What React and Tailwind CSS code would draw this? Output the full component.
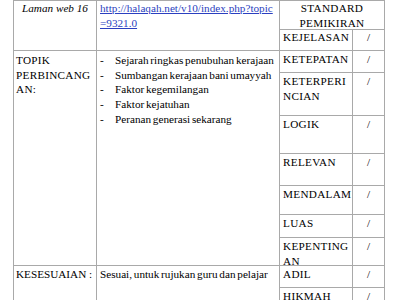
import React from 'react'

const kriteria = [
  { label: 'KETEPATAN', row: 'row-start-3' },
  { label: ['KETERPERI', 'NCIAN'], row: 'row-start-4' },
  { label: 'LOGIK', row: 'row-start-5' },
  { label: 'RELEVAN', row: 'row-start-6' },
  { label: 'MENDALAM', row: 'row-start-7' },
  { label: 'LUAS', row: 'row-start-8' },
  { label: ['KEPENTING', 'AN'], row: 'row-start-9' },
  { label: 'ADIL', row: 'row-start-10' },
  { label: 'HIKMAH', row: 'row-start-11' },
]

const topik = [
  'Sejarah ringkas penubuhan kerajaan',
  'Sumbangan kerajaan bani umayyah',
  'Faktor kegemilangan',
  'Faktor kejatuhan',
  'Peranan generasi sekarang',
]

export default function App() {
  return (
    <div className="h-[300px] w-[400px] overflow-hidden bg-white pl-[13px] font-['Liberation_Serif','Times_New_Roman',serif] text-[11.2px] leading-[14.5px] text-black">
      <div className="grid w-max grid-cols-[82px_182px_72px_31px] grid-rows-[28px_20px_21px_42px_37px_31px_28px_22px_27px_21px_40px] gap-px border border-[#a9a9a9] bg-[#a9a9a9]">
        {/* baris pertama */}
        <div className="col-start-1 row-start-1 row-span-2 bg-white text-center italic">Laman web 16</div>
        <div className="col-start-2 row-start-1 row-span-2 bg-white pl-[3px]">
          <span className="text-[#2b3fc0] underline">
            http://halaqah.net/v10/index.php?topic
            <br />
            =9321.0
          </span>
        </div>
        <div className="col-start-3 col-span-2 row-start-1 bg-white text-center tracking-[0.3px]">
          STANDARD
          <br />
          PEMIKIRAN
        </div>
        <div className="col-start-3 row-start-2 bg-white pl-[3px] tracking-[0.3px]">KEJELASAN</div>
        <div className="col-start-4 row-start-2 bg-white text-center">/</div>

        {/* topik */}
        <div className="col-start-1 row-start-3 row-span-7 bg-white pl-[2px] pt-[2px] tracking-[0.3px]">
          TOPIK
          <br />
          PERBINCANG
          <br />
          AN:
        </div>
        <div className="col-start-2 row-start-3 row-span-7 bg-white pl-[3px] pt-[2px] leading-[14.7px] [word-spacing:-1px]">
          {topik.map(t => (
            <div key={t} className="flex">
              <span className="w-[15px] shrink-0">-</span>
              <span>{t}</span>
            </div>
          ))}
        </div>

        {/* kesesuaian */}
        <div className="col-start-1 row-start-10 row-span-2 bg-white pl-[2px] pt-[1px]">KESESUAIAN :</div>
        <div className="col-start-2 row-start-10 row-span-2 bg-white pl-[3px] pt-[1px] [word-spacing:-1px]">
          Sesuai, untuk rujukan guru dan pelajar
        </div>

        {/* standard pemikiran */}
        {kriteria.map(k => (
          <React.Fragment key={Array.isArray(k.label) ? k.label.join('') : k.label}>
            <div className={`col-start-3 ${k.row} bg-white pl-[3px] pt-[1px] tracking-[0.3px]`}>
              {Array.isArray(k.label) ? (
                <>
                  {k.label[0]}
                  <br />
                  {k.label[1]}
                </>
              ) : (
                k.label
              )}
            </div>
            <div className={`col-start-4 ${k.row} bg-white pt-[1px] text-center`}>/</div>
          </React.Fragment>
        ))}
      </div>
    </div>
  )
}
